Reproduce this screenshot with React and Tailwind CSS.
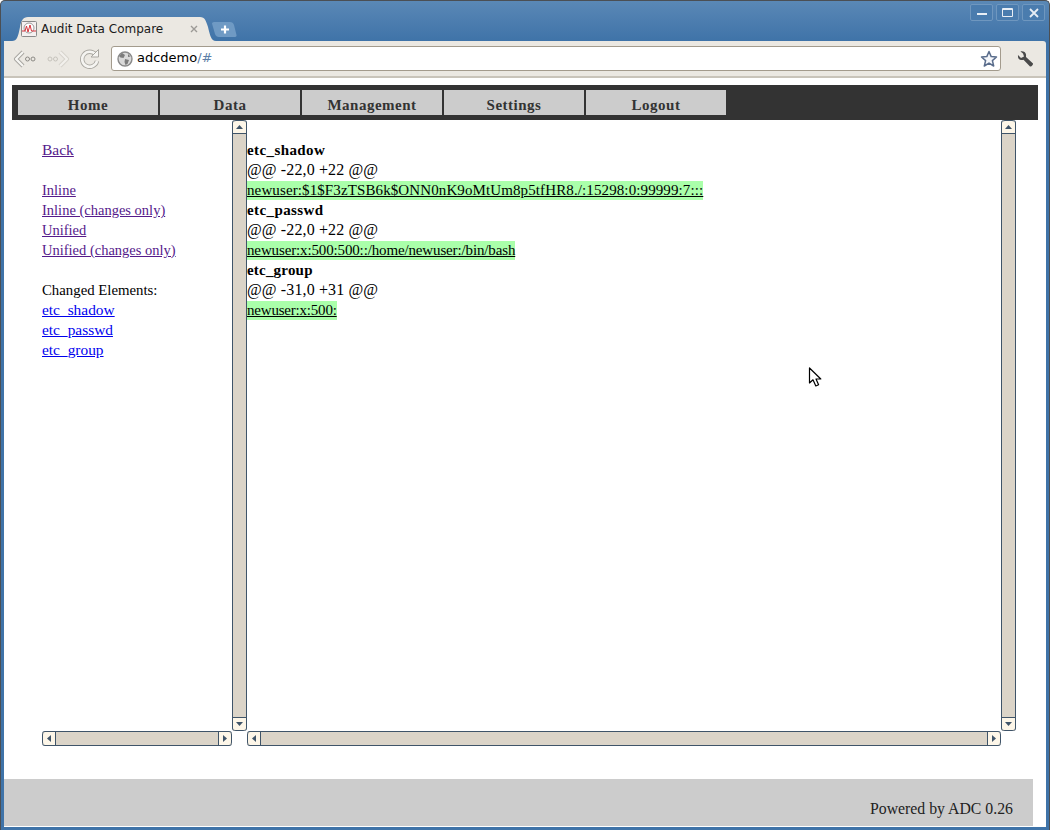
import React from "react";

const serif = "font-['Liberation_Serif',serif]";

function VBar() {
  return (
    <div className="flex w-[15px] flex-col rounded-[3px] border-x border-[#3f5469] bg-[#dbd4c8]">
      <div className="flex h-[14px] items-center justify-center rounded-t-[3px] border-y border-[#3f5469] bg-[#fdf6e8]">
        <svg width="7" height="4" viewBox="0 0 7 4"><path d="M3.5 0L7 4H0z" fill="#3f5469" /></svg>
      </div>
      <div className="flex-1" />
      <div className="flex h-[14px] items-center justify-center rounded-b-[3px] border-y border-[#3f5469] bg-[#fdf6e8]">
        <svg width="7" height="4" viewBox="0 0 7 4"><path d="M0 0H7L3.5 4z" fill="#3f5469" /></svg>
      </div>
    </div>
  );
}

function HBar({ className }) {
  return (
    <div className={`flex h-[15px] rounded-[3px] border-y border-[#3f5469] bg-[#dbd4c8] ${className}`}>
      <div className="flex w-[14px] items-center justify-center rounded-l-[3px] border-x border-[#3f5469] bg-[#fdf6e8]">
        <svg width="4" height="7" viewBox="0 0 4 7"><path d="M4 0V7L0 3.5z" fill="#3f5469" /></svg>
      </div>
      <div className="flex-1" />
      <div className="flex w-[14px] items-center justify-center rounded-r-[3px] border-x border-[#3f5469] bg-[#fdf6e8]">
        <svg width="4" height="7" viewBox="0 0 4 7"><path d="M0 0V7L4 3.5z" fill="#3f5469" /></svg>
      </div>
    </div>
  );
}

function WinButton({ children }) {
  return (
    <div className="flex h-[17px] w-[23px] items-center justify-center rounded-[2px] border border-[#6f97bf] bg-[#4a7cae]">
      {children}
    </div>
  );
}

function Visited({ children }) {
  return <a href="#" className="block underline text-[#551a8b]">{children}</a>;
}
function Link({ children }) {
  return <a href="#" className="block text-[15.4px] underline text-[#0000ee]">{children}</a>;
}
function Added({ children, className }) {
  return (
    <div className="h-[20px]">
      <span className={`inline-block bg-[#aaffaa] text-[15px] leading-[19px] underline ${className}`}>{children}</span>
    </div>
  );
}

function MenuItem({ children }) {
  return (
    <div className="flex h-[25px] w-[140px] items-center justify-center bg-[#cccccc] pt-[5px] text-[15px] font-bold tracking-[0.5px] text-[#333333]">
      {children}
    </div>
  );
}

export default function App() {
  return (
    <div className="relative flex h-[830px] w-[1050px] flex-col overflow-hidden rounded-t-[5px] border border-b-0 border-[#4b4f54] bg-[#3f73a8] bg-gradient-to-b from-[#5a88b6] from-0% to-[#3f73a8] to-[40px]">
      {/* Title bar with tabs */}
      <div className="flex h-[40px] shrink-0 justify-between pl-[11px] pr-[4px]">
        <div className="flex items-end">
          <div className="relative flex h-[24px] w-[204px] items-center pl-[9px] font-['DejaVu_Sans',sans-serif] text-[12px] text-[#1a1a1a]">
            <svg className="absolute inset-0" width="204" height="24" viewBox="0 0 204 24">
              <path d="M0 24C5 24 6 20 8 10C9 4 11 0 16 0H188C193 0 194 4 196 10C198 18 199 24 204 24Z" fill="#ebe8e2" />
            </svg>
            <svg className="relative shrink-0" width="16" height="16" viewBox="0 0 16 16">
              <rect x="0.5" y="0.5" width="15" height="15" rx="1" fill="#f4f0f0" stroke="#8a8a8a" />
              <circle cx="8" cy="7" r="5" fill="#fff" stroke="#9a9a9a" />
              <path d="M1 10H4L5.5 5L7 11L9 4L10.5 10H15" fill="none" stroke="#d8323a" strokeWidth="1" />
            </svg>
            <span className="relative ml-[4px] whitespace-nowrap">Audit Data Compare</span>
            <svg className="relative ml-[27px]" width="8" height="8" viewBox="0 0 8 8">
              <path d="M1 1L7 7M7 1L1 7" stroke="#9c9a96" strokeWidth="1.4" />
            </svg>
          </div>
          <svg className="mb-[4px] ml-[-4px]" width="25" height="15" viewBox="0 0 25 15">
            <path d="M0 1.5Q0 0 2 0H18Q21 0 22 3L24.5 13Q25 15 22 15H7Q4 15 3 12Z" fill="#6f9ac4" />
            <path d="M13 3.5V11.5M9 7.5H17" stroke="#ffffff" strokeWidth="2.2" />
          </svg>
        </div>
        <div className="mt-[3px] flex gap-[3px]">
          <WinButton><div className="mt-[3px] h-[2px] w-[10px] bg-[#e8eef5]" /></WinButton>
          <WinButton><div className="h-[9px] w-[11px] rounded-[1px] border border-t-2 border-[#e8eef5]" /></WinButton>
          <WinButton>
            <svg width="10" height="10" viewBox="0 0 10 10"><path d="M1 1L9 9M9 1L1 9" stroke="#e8eef5" strokeWidth="1.8" /></svg>
          </WinButton>
        </div>
      </div>

      {/* Toolbar */}
      <div className="mx-[3px] flex h-[37px] shrink-0 items-center rounded-tr-[3px] border-b-2 border-[#c9c4ba] bg-[#ebe8e2] pl-[9px] pr-[12px]">
        <svg width="24" height="22" viewBox="0 0 24 22" fill="none">
          <path d="M10 4L3 11L10 18" stroke="#a8a6a0" strokeWidth="4.2" strokeLinejoin="round" />
          <path d="M10 4L3 11L10 18" stroke="#f7f6f3" strokeWidth="2.2" strokeLinejoin="round" />
          <circle cx="14.5" cy="11" r="2" stroke="#8c8a85" />
          <circle cx="20" cy="11" r="2" stroke="#8c8a85" />
        </svg>
        <svg className="ml-[9px]" width="24" height="22" viewBox="0 0 24 22" fill="none">
          <path d="M14 4L21 11L14 18" stroke="#d6d3cc" strokeWidth="4.2" strokeLinejoin="round" />
          <path d="M14 4L21 11L14 18" stroke="#f2f0ec" strokeWidth="2.2" strokeLinejoin="round" />
          <circle cx="4" cy="11" r="2" stroke="#c6c3bc" />
          <circle cx="9.5" cy="11" r="2" stroke="#c6c3bc" />
        </svg>
        <svg className="ml-[9px]" width="22" height="22" viewBox="0 0 22 22" fill="none">
          <path d="M16.5 6.5A7.5 7.5 0 1 0 18 13" stroke="#a9a7a1" strokeWidth="4.4" />
          <path d="M16.5 6.5A7.5 7.5 0 1 0 18 13" stroke="#f5f4f1" strokeWidth="2.6" />
          <path d="M19.5 1.5V9H12Z" fill="#f5f4f1" stroke="#a9a7a1" />
        </svg>
        <div className="ml-[10px] flex h-[25px] flex-1 items-center rounded-[3px] border border-[#a39b8d] bg-white pl-[5px] pr-[2px] font-['DejaVu_Sans',sans-serif] text-[13px] text-black">
          <svg width="16" height="16" viewBox="0 0 16 16">
            <circle cx="8" cy="8" r="7" fill="#d9d9d9" stroke="#8a8a8a" strokeWidth="1.4" />
            <path d="M5 2L8 4L6.5 7L3.5 6.5L2 5ZM8 8L12 9L10.5 13L8.5 14L7.5 11ZM11 3L13.5 5.5L11 6Z" fill="#7c7c7c" />
          </svg>
          <span className="mb-[1px] ml-[4px]">adcdemo<span className="text-[#5d7fa8]">/#</span></span>
          <div className="flex-1" />
          <svg width="18" height="18" viewBox="0 0 18 18">
            <path d="M9 1.5L11.2 6.6L16.5 7L12.4 10.6L13.7 16L9 13.1L4.3 16L5.6 10.6L1.5 7L6.8 6.6Z" fill="#f4f6fa" stroke="#5a6d8c" strokeWidth="1.5" strokeLinejoin="round" />
          </svg>
        </div>
        <svg className="ml-[15px]" width="18" height="18" viewBox="0 0 18 18">
          <path d="M2 5L5 8L8 6.5L7 3.5L4.5 1.5C7 1 9.5 1.8 10 4.5C10.2 5.6 10 6.5 10 7L17 13.5C17.5 14.5 15.5 17 14 16.5L7.5 9.8C6 10.2 3.5 10 2.5 8.5C2 7.5 1.8 6 2 5Z" fill="#4a4a4a" />
        </svg>
      </div>

      {/* Page */}
      <div className={`mx-[3px] flex flex-1 flex-col bg-white ${serif} text-black`}>
        <div className="mx-[8px] mt-[7px] flex h-[35px] shrink-0 gap-[2px] bg-[#333333] pl-[6px] pt-[5px]">
          <MenuItem>Home</MenuItem>
          <MenuItem>Data</MenuItem>
          <MenuItem>Management</MenuItem>
          <MenuItem>Settings</MenuItem>
          <MenuItem>Logout</MenuItem>
        </div>

        <div className="flex pl-[38px]">
          <div className="flex w-[205px] flex-col">
            <div className="flex h-[611px]">
              <div className="w-[190px] pt-[20px] text-[14.5px] leading-[20px]">
                <Visited><span className="text-[15.5px]">Back</span></Visited>
                <div className="h-[20px]" />
                <Visited>Inline</Visited>
                <Visited>Inline (changes only)</Visited>
                <Visited>Unified</Visited>
                <Visited>Unified (changes only)</Visited>
                <div className="h-[20px]" />
                <div className="text-[14.8px]">Changed Elements:</div>
                <Link>etc_shadow</Link>
                <Link>etc_passwd</Link>
                <Link>etc_group</Link>
              </div>
              <VBar />
            </div>
            <HBar className="w-[190px]" />
          </div>
          <div className="flex w-[769px] flex-col">
            <div className="flex h-[611px]">
              <div className="w-[754px] pt-[20px] text-[16px] leading-[20px]">
                <div className="text-[15px] font-bold tracking-[0.4px]">etc_shadow</div>
                <div className="tracking-[0.13px]">@@ -22,0 +22 @@</div>
                <Added className="tracking-[0.11px]">newuser:$1$F3zTSB6k$ONN0nK9oMtUm8p5tfHR8./:15298:0:99999:7:::</Added>
                <div className="text-[15px] font-bold tracking-[0.4px]">etc_passwd</div>
                <div className="tracking-[0.13px]">@@ -22,0 +22 @@</div>
                <Added className="tracking-[-0.14px]">newuser:x:500:500::/home/newuser:/bin/bash</Added>
                <div className="text-[15px] font-bold tracking-[0.2px]">etc_group</div>
                <div className="tracking-[0.13px]">@@ -31,0 +31 @@</div>
                <Added className="tracking-[-0.2px]">newuser:x:500:</Added>
              </div>
              <VBar />
            </div>
            <HBar className="w-[754px]" />
          </div>
        </div>

        <div className="mr-[13px] mt-[33px] flex h-[47px] shrink-0 items-end justify-end bg-[#cccccc] pb-[7px] pr-[20px] text-[15.8px] leading-[20px] text-[#222222]">
          Powered by ADC 0.26
        </div>
      </div>
      <div className="h-[3px] shrink-0" />

      {/* Mouse pointer */}
      <svg className="absolute left-[807px] top-[366px]" width="14" height="21" viewBox="0 0 14 21">
        <path d="M1.5 1V16L5 12.8L7.8 19L10.6 17.8L8 12H12.8Z" fill="#ffffff" stroke="#000000" strokeWidth="1.2" strokeLinejoin="round" />
      </svg>
    </div>
  );
}
